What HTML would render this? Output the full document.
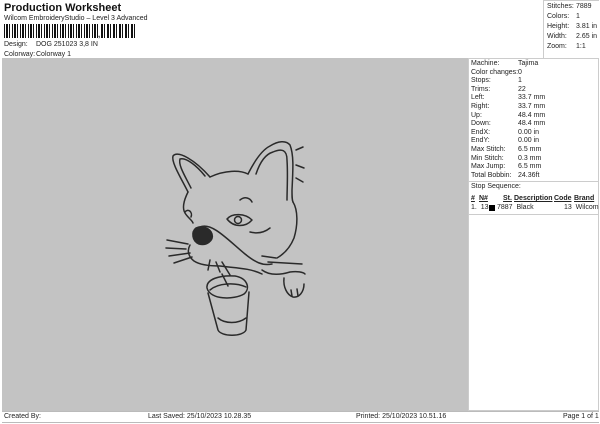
<!DOCTYPE html>
<html><head><style>
*{margin:0;padding:0;box-sizing:border-box}
body{width:600px;height:424px;background:#fff;font-family:"Liberation Sans",sans-serif;color:#222;position:relative;overflow:hidden;font-size:7px}
.a{position:absolute;white-space:nowrap}
.bc{position:absolute;left:4px;top:24px;width:95px;height:14px;background:repeating-linear-gradient(90deg,#111 0 1px,#fff 1px 2px,#111 2px 4px,#fff 4px 5px,#111 5px 6px,#fff 6px 8px)}
.bc2{position:absolute;left:101px;top:24px;width:35px;height:14px;background:repeating-linear-gradient(90deg,#111 0 2px,#fff 2px 3px,#111 3px 4px,#fff 4px 6px)}
</style></head><body>
<div class="a" style="left:4px;top:2px;font-size:11px;font-weight:bold;color:#111">Production Worksheet</div>
<div class="a" style="left:4px;top:15px">Wilcom EmbroideryStudio – Level 3 Advanced</div>
<div class="bc"></div><div class="a" style="left:98px;top:30px;font-weight:bold;font-size:8px">,</div><div class="bc2"></div>
<div class="a" style="left:4px;top:41px">Design:</div><div class="a" style="left:36px;top:41px">DOG 251023 3,8 IN</div>
<div class="a" style="left:4px;top:51px">Colorway:</div><div class="a" style="left:36px;top:51px">Colorway 1</div>
<div class="a" style="left:543px;top:0;width:56px;height:58px;border-left:1px solid #ccc;border-top:1px solid #ccc"></div>
<div class="a" style="left:547px;top:2px;line-height:10px">Stitches:<br>Colors:<br>Height:<br>Width:<br>Zoom:</div>
<div class="a" style="left:576px;top:2px;line-height:10px">7889<br>1<br>3.81 in<br>2.65 in<br>1:1</div>
<div class="a" style="left:2px;top:58px;width:466px;height:353px;background:#c3c3c3"></div>
<div class="a" style="left:468px;top:58px;width:131px;height:353px;border:1px solid #ccc;background:#fff"></div>
<div class="a" style="left:471px;top:60px;line-height:8.6px">Machine:<br>Color changes:<br>Stops:<br>Trims:<br>Left:<br>Right:<br>Up:<br>Down:<br>EndX:<br>EndY:<br>Max Stitch:<br>Min Stitch:<br>Max Jump:<br>Total Bobbin:</div>
<div class="a" style="left:518px;top:60px;line-height:8.6px">Tajima<br>0<br>1<br>22<br>33.7 mm<br>33.7 mm<br>48.4 mm<br>48.4 mm<br>0.00 in<br>0.00 in<br>6.5 mm<br>0.3 mm<br>6.5 mm<br>24.36ft</div>
<div class="a" style="left:469px;top:181px;width:130px;border-top:1px solid #ccc"></div>
<div class="a" style="left:471px;top:183px">Stop Sequence:</div>
<div class="a" style="left:471px;top:195px;font-weight:bold;text-decoration:underline">#</div>
<div class="a" style="left:479px;top:195px;font-weight:bold;text-decoration:underline">N#</div>
<div class="a" style="left:503px;top:195px;font-weight:bold;text-decoration:underline">St.</div>
<div class="a" style="left:514px;top:195px;font-weight:bold;text-decoration:underline">Description</div>
<div class="a" style="left:554px;top:195px;font-weight:bold;text-decoration:underline">Code</div>
<div class="a" style="left:574px;top:195px;font-weight:bold;text-decoration:underline">Brand</div>
<div class="a" style="left:471px;top:204px">1.&nbsp; 13</div>
<div class="a" style="left:489px;top:205px;width:6px;height:6px;background:#000"></div>
<div class="a" style="left:497px;top:204px">7887&nbsp; Black</div>
<div class="a" style="left:564px;top:204px">13&nbsp; Wilcom</div>
<div class="a" style="left:469px;top:214px;width:130px;border-top:1px solid #ccc"></div>
<div class="a" style="left:2px;top:411px;width:597px;height:12px;border-top:1px solid #bbb;border-bottom:1px solid #bbb"></div>
<div class="a" style="left:4px;top:413px">Created By:</div>
<div class="a" style="left:148px;top:413px">Last Saved: 25/10/2023 10.28.35</div>
<div class="a" style="left:356px;top:413px">Printed: 25/10/2023 10.51.16</div>
<div class="a" style="left:563px;top:413px">Page 1 of 1</div>
<svg class="a" style="left:0;top:0" width="600" height="424" viewBox="0 0 600 424" fill="none" stroke="#2a2a2a" stroke-width="1.5" stroke-linecap="round" stroke-linejoin="round">
<path d="M188 192 C181 178 171 162 173 156 C178 150 195 160 210 177"/>
<path d="M191 188 C185 176 178 165 180 159 C186 157 197 166 205 176"/>
<path d="M248 174 C255 160 262 150 270 146 C278 141 286 140 290 145 C294 155 293 170 292 190 C292 197 292 200 293 202"/>
<path d="M256 174 C260 162 266 154 273 152 C282 148 287 150 287 160 C288 175 287 190 287 200"/>
<path d="M210 177 C225 170 240 170 248 174"/>
<path d="M188 192 C184 200 182 208 185 213 C188 218 192 220 193 223"/>
<path d="M293 202 C298 210 298 225 294 238 C290 248 284 254 277 258"/>
<path d="M200 227 C212 222 228 240 245 254 C255 262 262 266 272 264"/>
<path d="M196 228 C191 232 192 241 199 244 C206 246 214 241 212 234 C210 228 202 225 196 228 Z" fill="#2a2a2a"/>
<path d="M190 245 C186 252 190 258 194 261 C200 265 210 266 220 266 C235 268 250 268 262 274"/>
<path d="M227 219 C232 213 245 213 252 220 C246 227 234 228 227 219 Z"/>
<circle cx="238" cy="220" r="3.5"/>
<path d="M185 212 C188 208 193 212 191 217"/>
<path d="M240 200 C245 196 250 198 252 202 M250 232 C258 234 265 232 270 228"/>
<path d="M262 270 C270 276 280 275 290 272 C297 271 303 272 305 274"/>
<path d="M284 278 C283 287 287 295 293 297 C299 298 304 292 304 284"/>
<path d="M291 290 L292 296 M297 289 L298 296"/>
<path d="M207 288 C206 279 220 275 235 276 C247 278 251 288 244 294 C234 300 210 300 207 288 Z"/>
<path d="M210 290 C218 283 235 282 246 287"/>
<path d="M208 293 L218 330 C221 337 243 337 246 330 L249 292"/>
<path d="M218 318 C225 324 238 324 246 318"/>
<path d="M228 286 L222 274"/>
<path d="M167 240 L188 244 M166 248 L186 249 M169 256 L190 253 M174 263 L192 257 M210 260 L208 270 M216 262 L220 272 M222 262 L230 275 M268 262 L302 264 M262 256 L276 258"/>
<path d="M296 150 L303 147 M296 165 L304 168 M296 178 L303 182"/>
</svg>
</body></html>
